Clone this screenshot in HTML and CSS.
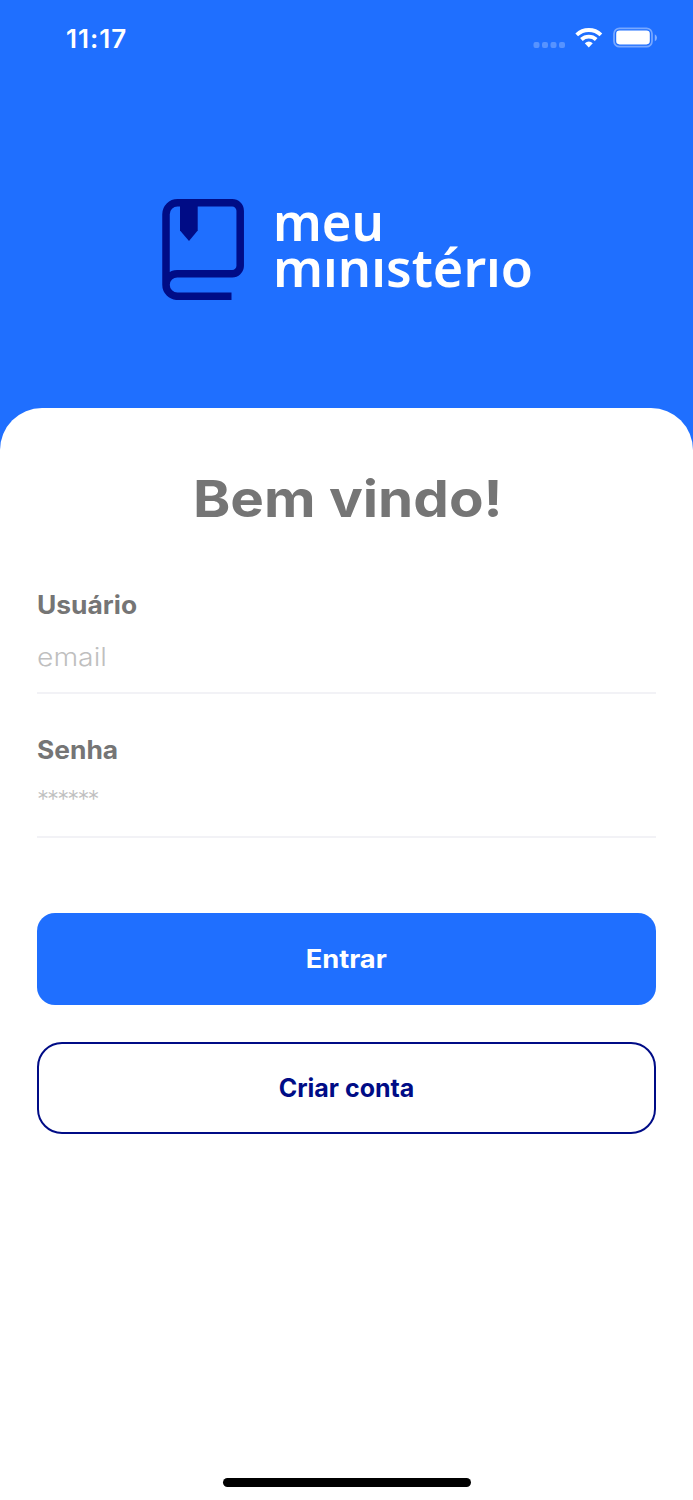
FILE: index.html
```
<!DOCTYPE html>
<html lang="pt-BR">
<head>
<meta charset="utf-8">
<title>Meu Ministério</title>
<link rel="stylesheet" href="styles.css">
</head>
<body>
<div class="screen">
  <header class="hero">
    <div class="status">
      <span class="time">11:17</span>
      <svg class="indicators" width="126" height="24" viewBox="0 0 126 24">
        <g fill="#fff" opacity=".25">
          <rect x="1.500" y="15" width="6" height="6" rx="2"/>
          <rect x="10" y="15" width="6" height="6" rx="2"/>
          <rect x="18.500" y="15" width="6" height="6" rx="2"/>
          <rect x="27" y="15" width="6" height="6" rx="2"/>
        </g>
        <g fill="none" stroke="#fff" stroke-width="3.900">
          <path d="M44.700 7.800A17.600 17.600 0 0 1 68.900 7.800"/>
          <path d="M49.400 12.500A11 11 0 0 1 64.200 12.500"/>
        </g>
        <path fill="#fff" d="M52.800 16.200A6.400 6.400 0 0 1 60.800 16.200L56.800 20.600Z"/>
        <rect x="82" y="1.300" width="38" height="18.400" rx="5.500" fill="none" stroke="#fff" stroke-opacity=".4" stroke-width="1.700"/>
        <rect x="84.200" y="3.600" width="33.600" height="13.800" rx="3.300" fill="#fff"/>
        <path d="M122.800 7.200Q125 8.300 125 10.700T122.800 14.200Z" fill="#fff" opacity=".45"/>
      </svg>
    </div>
    <div class="brand">
      <svg class="book" width="82" height="101" viewBox="0 0 82 101">
        <path fill="none" stroke="#000c86" stroke-width="7.500" d="M69.500 97.300H15.500A11.500 11.500 0 0 1 4 85.800V15.300A11.500 11.500 0 0 1 15.500 3.800H69.800A8 8 0 0 1 78.200 11.800V66.700A8 8 0 0 1 69.800 74.700H15.500A11.300 11.300 0 0 0 4 86"/>
        <path fill="#000c86" d="M18 5H35.700V31.500L27 42L18 31.500Z"/>
      </svg>
      <svg class="wordmark" width="260" height="100" viewBox="0 0 260 100" role="img" aria-label="meu ministério">
        <text x="-2" y="42" textLength="111" lengthAdjust="spacingAndGlyphs">meu</text>
        <text x="-2" y="87.500" textLength="260" lengthAdjust="spacingAndGlyphs">mınıstérıo</text>
      </svg>
    </div>
  </header>
  <main class="card">
    <h1 class="title"><span>Bem vindo!</span></h1>
    <form class="form">
      <label class="field">
        <span class="label">Usuário</span>
        <input class="input input-user" type="text" placeholder="email">
      </label>
      <label class="field">
        <span class="label">Senha</span>
        <input class="input input-pass" type="password" placeholder="******">
      </label>
      <button class="btn primary" type="button"><span>Entrar</span></button>
      <button class="btn outline" type="button"><span>Criar conta</span></button>
    </form>
    <div class="home-bar"></div>
  </main>
</div>
</body>
</html>
```
FILE: styles.css
```
* { box-sizing: border-box; }
body { margin: 0; font-family: Inter, "Liberation Sans", sans-serif; }
.screen { height: 1500px; display: flex; flex-direction: column; background: linear-gradient(#1f6fff 600px, #fff 600px); overflow: hidden; }
.hero { height: 408.400px; flex: none; }
.status { height: 76px; padding: 0 35px 0 66px; display: flex; justify-content: space-between; align-items: center; color: #fff; }
.time { font-size: 26px; font-weight: 600; letter-spacing: 1px; }
.indicators { display: block; margin-top: 2px; }
.brand { display: flex; gap: 31px; padding: 123px 0 0 162px; }
.book { display: block; flex: none; }
.wordmark { display: block; overflow: visible; font-family: "Noto Sans", sans-serif; font-size: 53px; font-weight: 600; fill: #fff; }
.card { flex: 1; display: flex; flex-direction: column; padding: 56px 37px 13px; background: #fff; border-radius: 42px 42px 0 0; }
.title { margin: 0; height: 70px; line-height: 70px; text-align: center; color: #757575; font-size: 51px; font-weight: 700; }
.title span { display: inline-block; transform: translateX(1px) scaleX(1.108); }
.form { display: flex; flex-direction: column; padding-top: 55px; }
.field { display: flex; flex-direction: column; height: 104.600px; margin-bottom: 39.800px; border-bottom: 2px solid #f2f2f6; }
.label { height: 32px; line-height: 32px; color: #757575; font-size: 25px; font-weight: 700; transform: scaleX(1.055); transform-origin: left; }
.input { width: 100%; height: 40px; margin-top: 15px; padding: 0; border: 0; outline: 0; background: none; font: 300 25.500px Inter, sans-serif; }
.input-user { width: 90%; transform: scaleX(1.11); transform-origin: left; }
.input-pass { height: 36px; }
.input-pass::placeholder { font-size: 24px; letter-spacing: -1.900px; }
.input::placeholder { color: #bfbfbf; opacity: 1; }
.btn { height: 92px; margin: 0; padding: 0; font: 700 25px Inter, sans-serif; }
.btn span { display: inline-block; }
.primary { margin-top: 35px; border: 0; border-radius: 18px; background: #1f6fff; color: #fff; }
.primary span { transform: scaleX(1.09); }
.outline { margin-top: 37px; border: 2px solid #000c86; border-radius: 25px; background: #fff; color: #000c86; }
.home-bar { width: 248px; height: 9px; margin: auto auto 0; border-radius: 5px; background: #000; }
```
